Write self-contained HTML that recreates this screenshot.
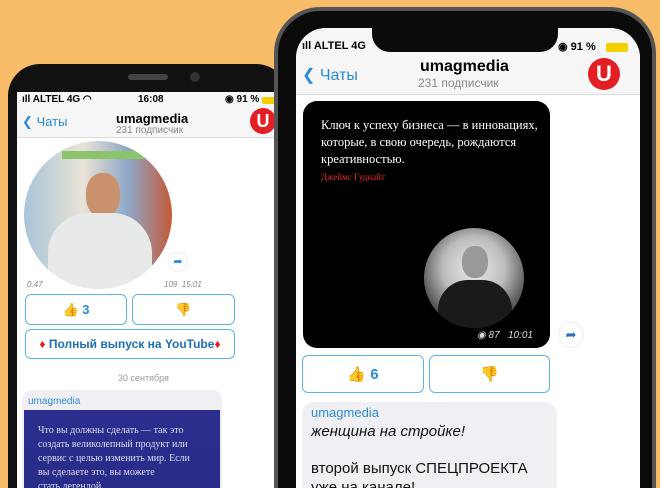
<!DOCTYPE html>
<html><head><meta charset="utf-8"><style>
*{margin:0;padding:0;box-sizing:border-box}
html,body{width:660px;height:488px;overflow:hidden}
body{background:#f9bd6a;font-family:"Liberation Sans",sans-serif;position:relative}
.a{position:absolute}
.blue{color:#2a8ad6}
.btn{position:absolute;border:1.5px solid #5eb4e4;border-radius:6px;background:#fff;display:flex;align-items:center;justify-content:center;color:#2a8ad6;font-weight:bold}
</style></head><body>
<!-- left phone -->
<div class="a" style="left:8px;top:64px;width:280px;height:460px;background:#111;border-radius:32px"></div>
<div class="a" style="left:128px;top:74px;width:40px;height:6px;background:#444;border-radius:3px"></div>
<div class="a" style="left:190px;top:72px;width:10px;height:10px;background:#333;border-radius:50%"></div>
<div class="a" style="left:17px;top:92px;width:262px;height:420px;background:#fff;border-radius:6px 6px 0 0"></div>
<div class="a" style="left:17px;top:92px;width:262px;height:46px;background:#f6f6f6;border-bottom:1px solid #ddd"></div>
<div class="a" style="left:22px;top:94px;font-size:10px;font-weight:bold">ıll ALTEL 4G ◠</div>
<div class="a" style="left:138px;top:94px;font-size:10px;font-weight:bold">16:08</div>
<div class="a" style="left:225px;top:94px;font-size:10px;font-weight:bold">◉ 91 %</div>
<div class="a" style="left:262px;top:97px;width:16px;height:7px;background:#f5d000;border-radius:2px"></div>
<div class="a blue" style="left:22px;top:114px;font-size:13px">❮ Чаты</div>
<div class="a" style="left:116px;top:111px;font-size:13px;font-weight:bold">umagmedia</div>
<div class="a" style="left:116px;top:125px;font-size:10px;color:#888">231 подписчик</div>
<div class="a" style="left:250px;top:108px;width:26px;height:26px;border-radius:50%;background:#e31e24;color:#fff;font-weight:bold;font-size:18px;text-align:center;line-height:26px">U</div>
<div class="a" style="left:24px;top:141px;width:148px;height:148px;border-radius:50%;overflow:hidden;background:linear-gradient(90deg,#a9c4d8,#e9e3d6 40%,#8fa8c8 70%,#c45a3a)">
 <div class="a" style="left:38px;top:10px;width:90px;height:8px;background:#8bc46a"></div>
 <div class="a" style="left:62px;top:32px;width:34px;height:44px;background:#c9926c;border-radius:45%"></div>
 <div class="a" style="left:24px;top:72px;width:104px;height:80px;background:#e8eaea;border-radius:40px 40px 0 0"></div>
</div>
<div class="a" style="left:168px;top:252px;width:20px;height:20px;border-radius:50%;background:#fff;border:1px solid #eee;color:#2a8ad6;font-size:11px;text-align:center;line-height:18px">➦</div>
<div class="a" style="left:27px;top:280px;font-size:8px;color:#888;font-style:italic">0:47</div>
<div class="a" style="left:164px;top:280px;font-size:8px;color:#888;font-style:italic">109 &nbsp;15:01</div>
<div class="btn" style="left:25px;top:294px;width:102px;height:31px;font-size:13px">👍 3</div>
<div class="btn" style="left:132px;top:294px;width:103px;height:31px;font-size:13px">👎</div>
<div class="btn" style="left:25px;top:329px;width:210px;height:30px;font-size:12px;color:#1d6fb8"><span style="color:#e31e24">♦</span>&nbsp;Полный выпуск на YouTube<span style="color:#e31e24">♦</span></div>
<div class="a" style="left:118px;top:373px;font-size:9px;color:#999">30 сентября</div>
<div class="a" style="left:22px;top:390px;width:200px;height:130px;background:#f0f0f4;border-radius:10px"></div>
<div class="a blue" style="left:28px;top:396px;font-size:10px">umagmedia</div>
<div class="a" style="left:24px;top:410px;width:196px;height:110px;background:linear-gradient(#2b2e8e,#282a86)"></div>
<div class="a" style="left:38px;top:424px;font-size:10px;color:#dde;font-family:'Liberation Serif',serif;line-height:14px">Что вы должны сделать — так это<br>создать великолепный продукт или<br>сервис с целью изменить мир. Если<br>вы сделаете это, вы можете<br>стать легендой.</div>
<!-- right phone -->
<div class="a" style="left:274px;top:7px;width:382px;height:540px;background:#555;border-radius:46px"></div>
<div class="a" style="left:278px;top:11px;width:374px;height:540px;background:#0b0b0b;border-radius:42px"></div>
<div class="a" style="left:296px;top:28px;width:344px;height:520px;background:#fff;border-radius:30px 30px 0 0;overflow:hidden">
 <div class="a" style="left:0;top:0;width:344px;height:67px;background:#f6f6f6;border-bottom:1px solid #ddd"></div>
 <div class="a" style="left:76px;top:-2px;width:186px;height:26px;background:#0b0b0b;border-radius:0 0 18px 18px"></div>
 <div class="a" style="left:6px;top:12px;font-size:11px;font-weight:bold">ıll ALTEL 4G</div>
 <div class="a" style="left:262px;top:12px;font-size:11px;font-weight:bold">◉ 91 %</div>
 <div class="a" style="left:310px;top:15px;width:22px;height:9px;background:#f5d000;border-radius:2px"></div>
 <div class="a blue" style="left:6px;top:37px;font-size:16px">❮ Чаты</div>
 <div class="a" style="left:124px;top:30px;font-size:16px;font-weight:bold">umagmedia</div>
 <div class="a" style="left:122px;top:48px;font-size:12px;color:#888">231 подписчик</div>
 <div class="a" style="left:292px;top:30px;width:32px;height:32px;border-radius:50%;background:#e31e24;color:#fff;font-weight:bold;font-size:22px;text-align:center;line-height:32px">U</div>
</div>
<div class="a" style="left:303px;top:101px;width:247px;height:247px;background:#000;border-radius:14px"></div>
<div class="a" style="left:321px;top:117px;font-size:12.5px;color:#fff;font-family:'Liberation Serif',serif;line-height:17px">Ключ к успеху бизнеса — в инновациях,<br>которые, в свою очередь, рождаются<br>креативностью.</div>
<div class="a" style="left:321px;top:172px;font-size:9px;color:#e0282e;font-family:'Liberation Serif',serif">Джеймс Гуднайт</div>
<div class="a" style="left:424px;top:228px;width:100px;height:100px;border-radius:50%;background:radial-gradient(circle at 50% 40%,#eee,#bbb 40%,#555 70%,#222);overflow:hidden">
 <div class="a" style="left:38px;top:18px;width:26px;height:32px;background:#999;border-radius:45%"></div>
 <div class="a" style="left:14px;top:52px;width:74px;height:50px;background:#1a1a1a;border-radius:30px 30px 0 0"></div>
</div>
<div class="a" style="left:477px;top:330px;font-size:10px;color:#ddd;font-style:italic">◉ 87 &nbsp;&nbsp;10:01</div>
<div class="a" style="left:558px;top:322px;width:26px;height:26px;border-radius:50%;background:#fff;border:1px solid #eee;color:#2a6fc6;font-size:13px;text-align:center;line-height:24px">➦</div>
<div class="btn" style="left:302px;top:355px;width:122px;height:38px;font-size:15px">👍 6</div>
<div class="btn" style="left:429px;top:355px;width:121px;height:38px;font-size:15px">👎</div>
<div class="a" style="left:302px;top:402px;width:255px;height:120px;background:#f0f0f4;border-radius:12px"></div>
<div class="a blue" style="left:311px;top:405px;font-size:13px">umagmedia</div>
<div class="a" style="left:311px;top:423px;font-size:15px;font-style:italic;color:#111">женщина на стройке!</div>
<div class="a" style="left:311px;top:460px;font-size:15px;color:#111">второй выпуск СПЕЦПРОЕКТА</div>
<div class="a" style="left:311px;top:479px;font-size:15px;color:#111">уже на канале!</div>
</body></html>
